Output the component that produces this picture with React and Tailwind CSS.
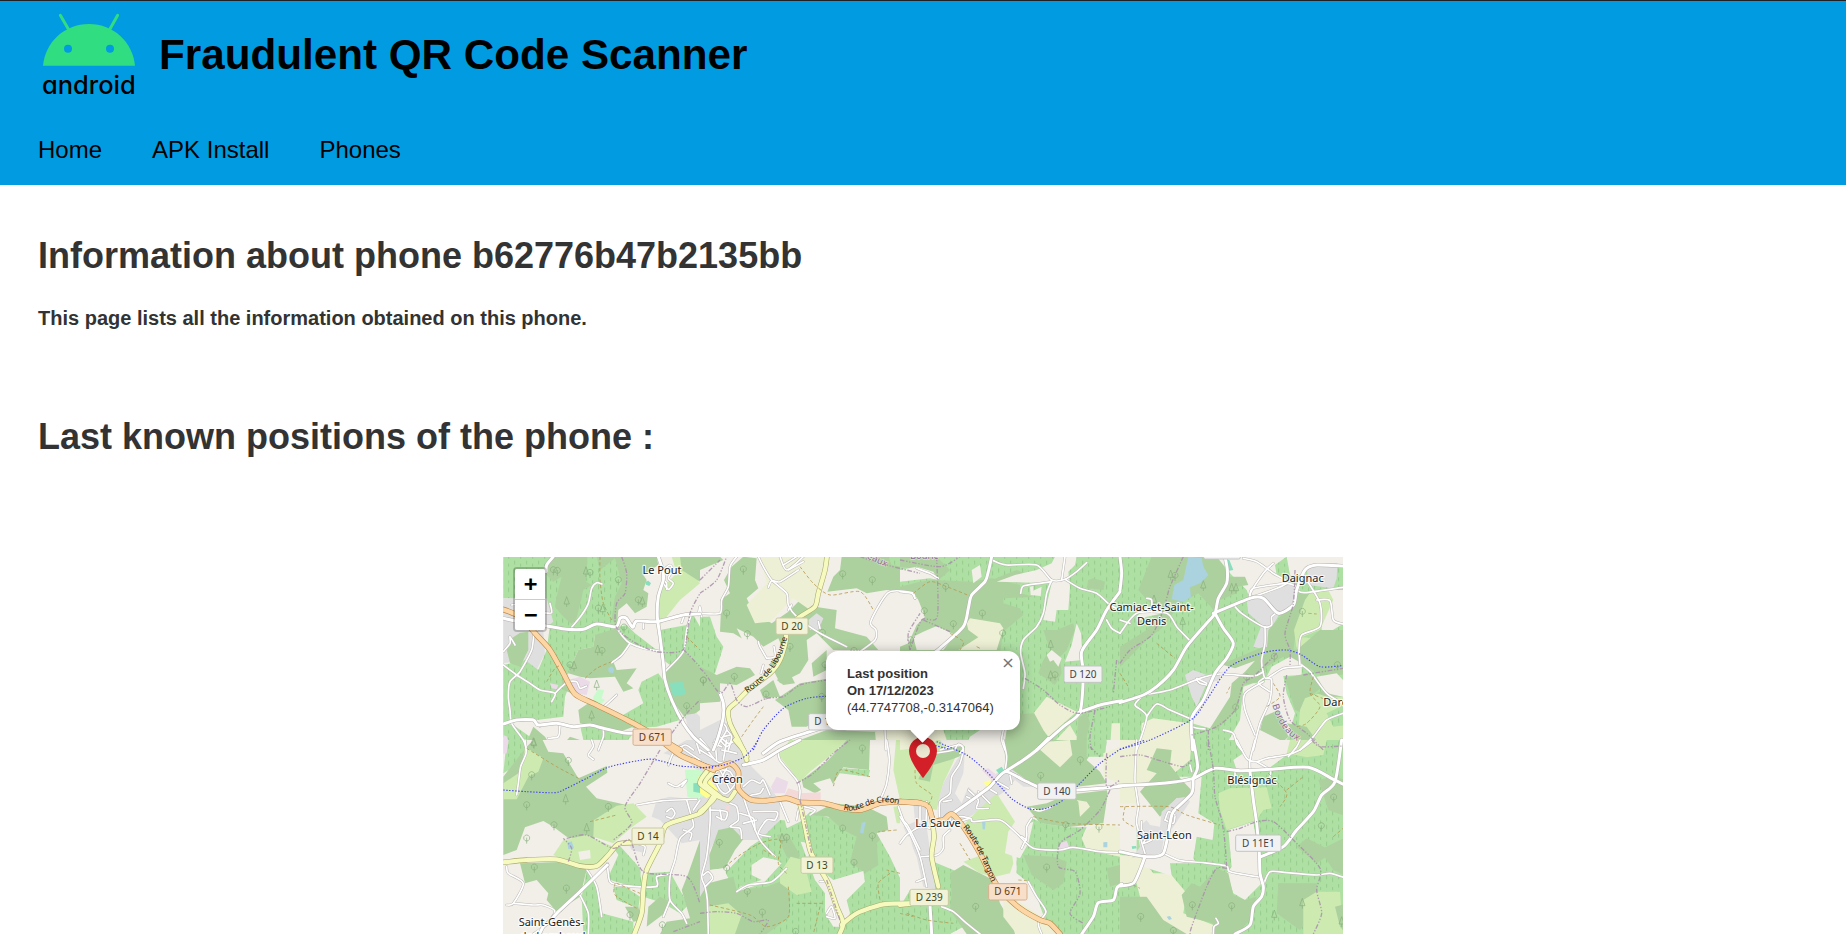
import React from "react";

/* Map drawing: eight tiles, three drawing units per pixel. */
const TILES = {
  A: [0, 0, 600, 570],
  B: [600, 0, 600, 570],
  C: [1200, 0, 660, 570],
  D: [1860, 0, 680, 570],
  E: [0, 570, 600, 582],
  F: [600, 570, 600, 582],
  G: [1200, 570, 660, 582],
  H: [1860, 570, 680, 582],
};

const FILL = {
  f: "#add19e",
  v: "#aedfa3",
  m: "#cdebb0",
  l: "#eef0d5",
  r: "#e0dfdf",
  g: "#f2efe9",
  w: "#aad3df",
  i: "#ebdbe8",
  k: "#f3d9d8",
  p: "#88dfbe",
  c: "#c8facc",
  y: "#ffff90",
};

const AREAS = {
  A: [
    "v 10,20 160,20 140,60 140,150 10,145",
    "f 150,20 470,20 475,45 430,75 440,90 430,120 445,130 440,170 405,190 380,160 355,180 350,235 215,228 140,180 135,60",
    "v 135,70 160,95 185,80 170,140 165,170 190,200 215,222 230,205 250,120 275,105 258,95 262,20 290,20 300,60 345,25 365,100 345,140 335,205 350,232 290,238 140,225",
    "r 10,145 140,145 160,215 130,240 135,310 110,360 70,330 10,340",
    "v 10,345 75,330 115,360 140,300 150,225 350,232 330,260 285,255 280,290 235,300 205,370 190,390 210,400 195,440 190,500 110,510 10,520",
    "f 20,300 35,265 60,248 85,245 85,300 60,350 30,340",
    "f 285,255 350,235 395,280 340,335 350,360 410,355 380,400 400,415 370,425 345,380 270,385 240,380 205,370 235,300 280,290",
    "v 350,232 380,225 405,250 470,300 400,285",
    "v 475,370 510,420 540,510 470,530 400,535 360,500 430,460 415,420 425,395",
    "i 205,390 240,380 270,395 260,435 225,430",
    "i 150,400 175,405 170,418 155,415",
    "f 185,390 205,395 215,430 190,420",
    "c 280,440 295,418 312,420 305,445 315,450 300,465 280,452",
    "f 235,480 265,460 330,480 360,505 400,530 360,545 300,535 240,520",
    "v 240,525 310,535 400,550 360,600 290,600 250,570",
    "v 10,520 40,525 90,560 70,600 10,560",
    "i 10,555 22,560 22,600 10,600",
    "f 70,600 100,530 135,560 160,600",
    "f 175,600 210,560 240,570 245,600",
    "m 515,20 540,20 600,100 540,150 480,225 468,160 490,110 530,70",
    "f 540,20 600,20 600,95 545,60",
    "v 480,240 560,225 575,185 600,230 600,360 555,305 510,345 490,330",
    "f 495,365 555,305 600,355 600,480 560,510 515,450 490,390",
    "p 508,398 548,396 558,432 520,440",
    "p 436,95 445,92 453,100 448,108 438,104",
    "r 555,495 590,490 600,500 600,600 570,560",
    "w 325,355 335,348 343,358 338,370 326,366",
  ],
  B: [
    "f 0,20 60,20 70,30 0,60",
    "f 95,50 130,20 170,25 165,90 175,115 140,145 160,185 215,220 265,185 300,150 345,170 410,180 405,235 500,260 535,300 400,300 350,250 320,270 325,330 300,370 240,400 215,350 200,320 170,310 150,280 100,250 60,245 62,200 60,150 90,130 72,90",
    "l 180,20 390,20 345,170 330,180 280,145 210,215 165,220 140,165 200,100",
    "g 110,235 160,260 190,290 235,265 250,300 200,350 180,330 150,315",
    "v 0,200 30,200 50,260 70,290 45,370 30,380 0,350",
    "f 0,350 50,375 110,350 150,355 165,375 110,405 60,400 60,455 0,460",
    "f 420,60 425,20 660,20 660,130 560,120 500,130 470,115 382,125 400,80",
    "v 565,20 660,20 660,60 575,45",
    "f 640,180 660,180 660,300 622,300 630,240",
    "f 270,420 300,400 390,385 380,490 320,530 275,530 265,480 225,450",
    "f 335,340 380,300 380,360 340,380",
    "f 180,420 220,390 240,440 190,445",
    "f 230,390 270,370 285,400 250,405",
    "r 0,540 60,510 80,520 140,600 0,600",
    "f 270,570 300,570 380,540 530,545 530,600 330,600",
    "r 325,210 350,190 370,205 355,240 330,240",
    "l 525,545 600,540 600,600 530,600",
  ],
  C: [
    "v 0,20 660,20 660,600 0,600",
    "f 0,110 60,95 100,90 215,95 275,85 360,105 360,130 400,140 310,145 310,160 360,175 370,195 310,245 300,310 0,310",
    "f 0,20 110,20 150,60 110,95 70,60 0,50",
    "g 0,60 50,50 100,65 115,90 90,85 0,95",
    "g 0,120 40,128 55,150 75,200 50,225 25,280 0,290",
    "g 215,60 240,45 245,80 220,100",
    "f 275,90 350,60 400,80 360,100",
    "l 200,220 210,205 300,220 310,235 290,300 175,300 235,262 205,240",
    "g 70,245 110,228 165,255 130,300 50,300 40,260",
    "g 455,40 465,20 530,20 525,45 505,65 510,110 505,180 470,180 465,215 430,210 455,100 290,95 345,75 410,60",
    "g 390,110 400,108 400,122 425,110 422,138 392,135",
    "f 430,240 470,240 520,220 525,240 500,300 480,320 485,370 465,405 415,370 430,330 450,300",
    "g 530,220 543,250 548,330 495,335 515,285",
    "g 440,315 455,300 485,325 475,350 460,330 450,335",
    "f 565,90 580,85 615,95 610,120 560,115",
    "f 310,480 370,492 405,490 430,530 440,560 410,600 310,600",
    "l 402,488 440,440 530,485 445,560 430,540",
    "l 440,600 510,525 530,560 530,600",
    "f 535,505 560,485 570,520 560,560 565,600 530,580",
    "l 635,520 660,520 660,600 630,600",
    "g 210,560 240,540 320,540 310,600 190,600",
    "l 0,540 130,540 150,600 0,600",
  ],
  D: [
    "v 0,20 680,20 680,600 0,600",
    "f 95,20 300,20 325,80 350,90 350,130 300,150 290,190 235,130 180,160 130,230 80,270 0,350 0,290 80,240 100,200 95,165 55,120",
    "w 205,20 245,24 250,50 265,75 240,100 210,112 213,140 190,155 155,148 163,105 190,90",
    "g 50,200 80,170 115,165 130,190 80,200 50,215",
    "g 290,20 500,20 465,45 470,75 510,95 480,120 390,148 380,120 330,70",
    "f 330,80 375,80 385,105 350,110",
    "p 312,28 328,30 340,60 328,62",
    "r 380,150 420,140 520,98 540,115 525,155 480,190 450,240 440,300 400,290 425,225 385,190",
    "g 500,20 669,20 669,45 560,50 555,75 510,75",
    "r 560,45 652,38 650,85 640,115 565,105",
    "g 600,120 680,120 680,215 630,245 605,240",
    "f 535,125 570,130 560,200 530,230 520,300 440,310 445,240 485,195 525,160",
    "m 555,150 570,128 625,120 640,150 600,240 545,262 587,265 582,300 530,300 522,240",
    "f 300,345 430,290 530,300 600,240 680,240 680,370 620,385 560,350 490,320 440,350 420,395 370,405 350,480 290,540 240,520 270,530 330,440",
    "g 280,370 310,345 345,355 405,332 375,365 335,400 330,440 270,535 215,520 250,450",
    "r 195,375 220,360 260,375 300,365 300,390 260,400 230,470 215,440",
    "g 370,410 400,400 430,400 455,350 510,320 545,340 545,375 490,378 500,430 525,490 505,560 480,600 310,600 360,510",
    "f 430,500 475,480 505,560 490,575 420,540",
    "f 495,385 560,370 620,400 570,440 550,490 525,480",
    "m 505,600 535,550 540,480 555,445 640,415 680,440 680,600",
    "f 590,430 640,410 680,420 680,440 620,440",
    "v 620,490 680,460 680,525 640,530",
    "g 590,380 650,370 669,390 669,440 620,430",
    "f 500,520 560,530 610,600 560,600",
    "l 65,520 100,505 210,520 215,600 60,600",
    "v 0,540 30,520 60,540 40,600 0,600",
  ],
  E: [
    "v 20,0 80,0 75,60 10,100",
    "i 10,0 26,0 20,40 10,42",
    "f 80,20 100,0 128,0 145,35 190,40 235,115 320,78 322,98 258,140 290,175 380,195 300,240 282,262 285,310 200,290 160,260 130,243 75,262 50,330 10,345 10,110",
    "m 75,20 130,55 115,95 85,110 50,178 10,178 10,130 62,95",
    "m 282,240 350,197 400,190 440,230 395,262 340,310 280,290",
    "m 190,300 260,285 340,320 320,360 280,385 230,380 160,345",
    "g 235,335 270,330 272,355 240,360",
    "f 60,370 200,365 260,390 240,470 170,515 140,480 145,460 110,420 75,430",
    "f 145,478 200,485 185,515",
    "v 325,330 360,318 420,385 425,440 400,440 330,420 325,365",
    "v 245,470 260,390 290,430 305,520 345,530 400,545 400,582 250,582",
    "v 340,440 375,440 420,470 415,505 350,480",
    "v 440,400 510,395 545,460 565,495 540,520 490,490 430,470",
    "f 375,500 415,500 425,540 400,545",
    "f 445,500 480,470 510,485 500,515 440,560",
    "f 480,582 500,545 570,535 545,450 565,400 600,300 600,582",
    "r 470,180 510,170 600,180 600,300 545,310 480,240 455,230",
    "r 490,40 560,0 600,0 600,100 560,60",
    "c 555,90 612,88 615,130 595,180 562,170",
    "y 595,110 612,100 612,125 595,122",
    "p 580,130 600,128 605,160 580,155",
    "r 385,310 430,310 438,340 395,330",
    "g 320,360 345,330 355,345 330,400",
    "w 202,308 215,304 222,325 205,328",
  ],
  F: [
    "r 0,0 115,0 135,60 195,120 240,185 240,235 200,300 130,300 95,265 60,270 30,330 30,420 45,445 0,470",
    "v 180,300 240,240 300,245 330,215 535,280 570,340 640,425 630,450 660,460 660,582 180,582 75,400 150,320",
    "f 335,225 400,190 500,200 560,230 565,270 530,310 535,375 495,400 450,365 470,290 430,270 385,230",
    "f 28,345 55,270 95,262 130,298 105,330 75,385 30,390",
    "g 30,390 70,385 85,415 40,430",
    "f 25,430 100,410 110,450 200,440 240,425 270,430 270,530 200,582 0,582 0,470",
    "g 155,375 190,352 230,360 245,370 190,430 110,455 120,440 185,420 155,405",
    "f 230,285 262,280 300,345 290,370 260,350",
    "m 240,400 272,350 310,360 335,455 290,465 240,430",
    "m 20,500 85,490 125,525 105,582 30,582",
    "g 302,305 330,310 325,360 400,420 490,393 495,425 440,480 450,520 430,560 400,560 375,520 375,460 345,420",
    "g 240,180 300,180 300,245 260,265",
    "m 235,45 270,0 440,0 400,40 330,95 300,125",
    "f 385,60 440,0 510,0 507,90 430,82 400,130 345,160 310,142 305,120",
    "g 340,130 390,115 400,135 370,155",
    "v 430,85 510,90 505,110 420,100",
    "m 588,0 660,0 660,180 600,180 580,90",
    "i 213,140 230,110 265,125 255,160 220,160",
    "k 265,145 300,155 300,190 250,172",
    "k 300,160 362,157 362,182 300,186",
    "m 580,200 640,195 640,250 590,250",
    "w 485,248 497,246 490,280 480,278",
    "k 75,200 90,195 86,214 76,212",
    "g 530,280 600,260 650,405 605,425 570,350",
    "c 0,90 25,110 10,170 0,170",
    "y 0,110 30,120 55,150 20,175 0,160",
    "r 600,250 660,250 660,320",
  ],
  G: [
    "m 0,0 120,0 165,55 130,130 110,210 0,185",
    "l 0,0 110,0 90,20 0,30",
    "f 80,60 140,25 195,18 190,45 150,60 100,75 90,125 55,118",
    "r 115,180 130,130 170,60 195,30 190,100 165,160 185,190 205,140 225,160 250,150 290,100 330,85 400,120 410,140 370,140 345,120 320,150 270,185 240,210 180,250 120,240",
    "i 245,90 265,85 290,105 280,125",
    "p 288,90 305,80 313,92 300,106",
    "r 40,190 75,190 80,260 100,400 105,450 70,440 50,350 10,260 45,245",
    "f 310,0 440,0 400,50 320,95",
    "f 330,85 450,0 600,0 560,60 600,95 620,130 530,140 410,140",
    "l 410,20 440,5 510,0 517,45 480,82",
    "v 560,0 620,0 615,50 560,50",
    "l 610,40 660,20 660,130 610,110",
    "f 380,200 440,190 500,165 625,150 610,250 500,262 420,250",
    "l 530,180 560,185 570,200 540,230 535,185",
    "g 620,150 660,145 660,220 640,220",
    "l 560,270 600,250 660,262 660,360 560,330 545,295",
    "m 235,210 290,160 345,245 325,275 340,370 330,400 285,410 240,330 195,250",
    "v 395,235 430,250 500,262 560,262 545,295 560,330 660,350 660,582 450,582 400,440 350,400 350,320",
    "g 325,275 400,245 385,310 360,355 315,340",
    "g 110,290 190,250 245,350 190,365 160,390 110,360",
    "m 190,365 245,345 280,410 240,400",
    "f 370,345 460,350 500,365 490,430 460,450 395,405",
    "v 100,365 160,390 260,440 300,500 150,582 0,582 0,500 30,450 105,450",
    "f 150,400 190,375 240,400 280,420 300,490 340,560 345,582 200,582 150,510 155,460",
    "l 310,480 350,480 440,540 475,582 350,582 310,530",
    "i 473,335 480,310 500,302 508,322",
    "f 620,385 660,375 660,430 630,440",
    "g 0,285 30,290 45,350 40,420 20,420 0,380",
    "w 246,245 257,242 255,268 248,268",
    "w 610,307 622,306 622,322 610,322",
    "y 250,128 270,120 278,135 262,142",
  ],
  H: [
    "v 0,0 680,0 680,582 0,582",
    "l 0,0 215,0 210,60 150,110 60,130 55,260 0,260",
    "l 0,345 60,350 100,400 150,400 200,460 190,520 280,555 280,582 130,582 80,500 0,465",
    "v 0,440 50,430 60,470 0,510",
    "g 0,190 50,190 50,340 0,340",
    "g 50,130 180,110 245,110 235,220 283,250 278,300 230,290 220,355 230,370 150,370 155,408 70,380 50,260",
    "f 110,25 155,30 150,75 185,120 212,148 208,175 170,175 120,230 60,155 110,100 80,90",
    "r 120,260 125,215 170,175 200,170 210,185 160,260 130,300 125,340 35,355 60,320 58,260 80,240 90,255",
    "g 350,0 520,0 500,45 440,90 350,90 340,60 370,40",
    "m 510,0 620,0 610,45 560,52 500,40",
    "m 295,160 330,145 440,142 455,205 430,210 410,240 320,270 300,210",
    "g 325,270 400,245 410,310 425,430 375,480 340,460 320,400 335,380",
    "f 0,470 80,470 130,540 200,582 0,582",
    "f 185,465 215,430 240,440 290,385 325,400 340,465 375,480 410,470 390,540 350,582 275,582 280,550 200,530",
    "f 475,430 590,430 600,500 540,570 470,520",
    "f 595,120 640,110 680,120 680,230 625,210",
    "f 530,320 560,295 640,335 590,370",
    "f 600,330 680,290 680,410 640,390",
    "m 550,480 590,455 660,455 669,582 550,582",
    "f 645,500 680,490 680,582 660,560",
    "p 35,319 48,318 50,325 37,327",
    "w 140,530 150,528 156,537 147,540",
  ],
};

const ROADS = {
  A: [
    "w 160,20 140,45 138,65", "w 10,205 80,220 140,228 200,238 250,238 290,222 348,230 360,205 378,204 398,232 410,213 470,215 550,195 600,192",
    "s 215,232 245,195 265,160 275,115 290,98 306,102", "s 348,230 370,262 390,280 430,295 485,305",
    "s 390,280 365,315 335,338", "w 475,20 488,60 490,90 475,140 472,200 480,260 490,340 495,390 515,450 550,520 580,560 625,600",
    "s 490,60 510,45 518,60 505,85 520,100 505,118 490,100", "s 490,90 500,100 500,118", "s 490,370 530,330 552,300 560,240 575,190",
    "s 595,195 600,170 605,200", "s 545,218 552,198", "s 430,235 430,215",
    "s 145,228 105,245 95,300 60,365 30,395 25,440 30,480 35,520 70,570 80,600", "s 10,345 50,375 90,400 120,420 165,430 155,455",
    "s 165,430 185,410 205,395 230,395 240,415 260,408", "s 10,305 30,280 30,260 45,285", "w 10,522 50,510 100,510 115,525 170,520 220,530 270,525 310,535 370,548 410,550",
    "s 115,520 120,530", "s 180,525 175,560 145,565", "s 310,540 310,560 295,600", "s 350,435 310,472", "s 35,165 70,160", "s 150,160 155,188 130,188",
    "o 0,175 60,200 110,255 150,300 190,370 225,432 290,465 400,520 540,600",
  ],
  B: [
    "s 110,20 90,50 85,110 65,150 60,190 0,190", "s 175,20 190,50 215,90 260,130 265,165 290,200 360,250 440,290",
    "s 295,60 240,95 215,92 205,112", "s 240,20 260,60 310,20", "s 250,45 290,20", "s 265,60 310,35", "s 265,180 275,165",
    "s 200,325 180,290 175,275", "s 200,325 225,320 222,290", "s 360,235 355,215", "s 480,305 525,270 528,240 512,215 565,128 635,128 645,145",
    "w 190,610 240,575 330,545 380,530", "s 183,370 190,345", "w 60,430 70,460 70,500 55,560 40,600", "s 50,590 80,540 70,520", "s 0,565 30,600", "s 60,560 85,580 110,570", "s 80,540 95,560 85,600",
    "s 70,560 90,555", "s 40,580 65,590",
    "s 555,540 558,600",
    "y 382,10 375,60 355,130 345,170 300,200 260,235 258,270 240,330 210,370 150,415 110,455 85,480 90,520 115,570 140,620",
  ],
  C: [
    "w 275,20 265,65 255,95 215,135 205,175 190,230 120,295 100,310", "s 280,32 320,45 410,45 455,90 495,88 530,65 560,38", "s 485,90 495,20",
    "s 455,90 440,130 430,190 410,230 370,270 362,310 375,370 370,415", "s 455,95 420,100 370,108 362,130", "s 495,88 540,115 590,130 630,165 660,180",
    "s 0,125 35,130 45,145", "s 50,55 90,70 115,85", "w 660,125 620,180 590,240 545,305 550,370 540,485 490,530 410,600", "s 620,210 635,235 660,250",
    "w 535,488 600,465 665,452", "s 310,540 305,570 315,600", "s 120,600 175,585 190,595 180,610",
  ],
  D: [
    "w 315,20 322,60 320,100 295,145 285,190 260,220 200,290 160,360 110,410 70,435 0,458", "w 280,190 390,145 430,145 475,190 520,165 530,120 555,60 590,45 669,48",
    "w 285,190 310,235 340,280 320,325 285,370 250,450 215,505 218,600", "s 370,25 410,35 460,70 500,100 390,140 430,70 460,40", "s 390,140 400,115 500,100 530,110",
    "s 345,170 365,190 430,230 455,225 455,200 475,185", "s 435,230 435,280 425,330 430,370 440,385 490,355 545,350", "s 530,120 555,128 669,112", "s 560,90 600,160 600,230 545,255 537,300 540,345",
    "s 590,150 630,152 640,210 669,222", "s 545,345 570,365 620,430 669,460", "s 70,435 150,420 240,385 300,372 400,378 430,365", "s 230,385 260,400", "s 230,390 240,400 260,405",
    "s 440,385 455,390 450,450 420,520 400,600", "s 430,395 375,430 375,480 405,555", "s 430,385 415,400 450,425", "s 310,540 340,550 350,580 365,600", "s 0,250 50,190 140,190 170,230 208,270", "s 95,185 95,150 80,145", "s 0,210 30,220",
    "s 70,435 45,465 80,500 50,600", "s 80,500 110,462 150,480 215,508", "s 215,530 235,535 255,537", "s 669,490 620,510 580,560 540,600", "w 0,20 5,70 0,120",
  ],
  E: [
    "s 75,0 78,40 62,80 55,130 50,165", "s 275,0 280,20 265,45 280,58", "s 20,380 25,400 70,430 40,490 20,495", "s 40,490 100,495 130,495 165,515 130,560 100,582",
    "w 322,375 240,455 170,520 150,545 130,560 110,600", "s 240,465 265,520 265,582", "s 258,385 290,440 305,530", "s 322,370 330,425 370,437 468,440 470,410 510,402",
    "s 410,195 490,182 590,178", "s 560,180 570,215 580,260 540,295 525,360 510,410 510,480 545,520 560,550", "s 510,480 490,530", "s 500,215 515,205 525,220 515,235 500,230", "s 410,310 435,320 430,345",
    "s 505,130 530,140 560,120 545,140", "s 505,75 520,40 555,15 580,30", "s 540,20 600,60", "s 590,10 600,40", "s 580,210 600,180", "s 550,270 575,280 570,300",
    "o 480,0 540,45 600,72 640,90", "y 10,367 80,360 170,358 240,378 290,378 325,345 355,312 400,308", "y 640,170 600,220 500,255 480,310 440,390 430,450 425,520 400,590",
    "y 640,95 615,130 660,170",
  ],
  F: [
    "s 0,0 45,60 70,70", "s 45,0 50,60", "s 0,30 40,55", "s 60,0 80,20 100,0", "s 65,30 110,40", "s 80,0 70,60", "w 130,75 190,60 240,30 300,0",
    "s 235,30 240,60 290,120 300,150 298,180", "s 130,170 150,230 180,300 225,350", "s 130,140 155,120 180,130 190,120 210,165", "s 140,175 155,165 180,160 190,145",
    "s 240,185 265,245", "s 160,215 230,215 225,240 200,240 175,280 210,290", "s 30,200 30,250 20,350 5,410 15,440 22,480 25,582", "s 10,405 25,395 38,415 15,440",
    "s 30,210 80,215 75,240 50,230", "s 90,190 110,200 115,240 90,260 120,265 125,295", "s 120,220 160,235 165,270", "s 60,210 65,240", "s 130,250 170,240",
    "s 560,0 568,60 560,130 545,170", "s 110,455 145,435 215,425 260,385", "s 595,200 610,240 625,260 660,330", "s 290,240 300,200 345,210 330,225",
    "s 45,100 60,90 90,95 105,130 80,160 60,150 45,120", "s 60,90 90,150", "s 80,85 55,130", "s 50,110 95,130",
    "s 360,425 385,425", "s 380,520 395,500 405,535 380,530",
    "y 0,215 45,170 0,130 20,95", "y 140,60 130,30 105,0", "y 45,165 85,180 105,155",
    "y 300,190 315,260 330,330 350,370 385,430 410,500 430,550 415,590", "y 425,555 470,520 550,493 640,490",
    "o -20,62 20,80 50,85 90,70 115,95 115,145 150,178 200,182 260,175 300,187 370,190 430,205 480,210 540,190 600,185 660,190",
  ],
  G: [
    "w 315,95 370,60 410,30 445,-5", "w 160,220 230,170 270,140 315,95 370,120 412,140", "w 529,150 600,145 665,138", "s 310,0 320,50 315,95",
    "s 100,40 160,30 175,12 190,25 180,70 155,110 150,160 120,185 118,230", "s 155,180 130,185", "s 205,150 235,180 230,205 265,205", "s 235,155 270,190", "s 265,145 290,160", "s 290,125 325,145", "s 330,105 335,130", "s 200,170 220,180",
    "s 150,225 155,250 210,235 220,245 300,240 350,280 400,325 480,330 520,322 600,335 665,337", "s 395,235 380,260 380,290 365,325", "s 365,290 380,300", "s 395,205 420,213 455,200",
    "s 0,230 30,280 60,350 80,440", "s 0,310 20,285 60,260 90,265", "s 65,350 110,345 130,325 130,290 150,270", "s 50,425 75,415", "w 90,495 95,582", "s 125,500 160,515 200,550 240,582",
    "s 385,425 410,470 438,515 415,550 425,582", "w 665,432 650,445 640,480 595,488 580,530 545,582", "s 210,235 180,230 150,250", "s 60,250 60,180", "s 78,250 80,185",
    "y 95,230 102,290 95,350 115,440", "y 0,495 40,490",
    "o 0,185 50,187 85,200 100,240 130,240 155,222 190,260 240,340 270,400 300,450 360,505 420,540 450,550 480,582",
  ],
  H: [
    "w -5,137 100,132 170,125 220,115 285,85 360,92 450,88 565,82 640,118 680,138", "w 220,0 233,80 220,115 215,160 160,215 150,250 130,340 80,350 0,335", "w 75,350 60,390 40,430 0,438",
    "s 50,0 45,120 55,200 50,250 75,340", "s 65,245 65,270 80,290 70,310 95,300", "s 135,240 145,215 165,225", "s 135,240 160,250 165,230", "s 130,340 180,362 250,368 320,378 330,395 420,412",
    "w 390,95 400,180 410,250 418,340 420,400 430,440 425,470 400,500 390,555 345,582", "s 405,0 390,60 390,90", "s 350,0 380,55 410,65 440,55 500,45 540,30 580,0", "s 410,65 450,90 450,110", "s 505,50 530,20 540,0", "s 345,95 345,120",
    "w 423,350 490,320 530,270 580,215 605,165 645,125 665,0", "s 430,435 450,395 500,398 590,405 630,400 680,415", "s 280,582 282,560 295,550 288,535", "s 210,75 215,95",
  ],
};

const LINES = {
  A: [
    "d 365,20 380,70 375,130 350,160 348,230 400,275 470,305 550,298 570,190 600,130", "d 550,298 600,350", "d 515,550 560,490 600,450",
    "p 300,20 300,90 310,160 335,210", "p 140,395 165,355 185,345", "p 335,335 290,355 255,385", "p 560,260 600,300",
  ],
  B: [
    "d 0,130 50,90 80,20", "d 0,90 60,30", "d 0,355 15,370 60,430 90,400 110,450 140,470 200,445 250,440 300,405 380,390", "d 480,20 540,40 660,70", "d 630,300 625,250 660,190",
    "p 300,50 340,100 390,135 480,125 520,180", "p 125,560 160,510 190,470",
    "b 160,600 190,540 250,475 320,445 390,438",
  ],
  C: [
    "d 0,30 120,50 180,20", "d 110,20 112,200 65,210 30,300", "d 70,210 150,245", "d 375,385 430,420 480,465 535,490 630,470", "d 585,480 570,560 575,600", "d 650,330 640,430",
    "p 40,130 90,95 140,110 210,138", "p 150,250 190,275 180,300", "p 230,290 240,295", "b 80,580 150,598",
  ],
  D: [
    "d 190,20 150,110 130,180 95,255 30,300 0,340", "d 525,60 520,160 495,250 510,300 510,345", "d 470,310 400,380 370,400 345,480 290,530 215,555", "d 265,540 265,600", "d 500,375 490,440 510,510 560,550 610,600", "d 550,375 669,355",
    "p 110,280 165,325", "p 580,380 570,430 600,470 560,520 530,530", "p 570,430 620,450", "p 330,410 320,430", "p 565,190 590,192", "p 460,400 480,440 440,470", "p 0,370 25,410",
    "b 0,598 90,570 215,508 260,450 330,350 430,308 500,300 545,315 600,350 669,347",
  ],
  E: [
    "d 480,30 450,80 420,130 375,200 395,250 340,300", "d 200,295 260,285 340,325 390,300 430,395 560,410 600,490", "d 205,365 215,325 190,295", "d 520,575 600,545",
    "p 80,25 170,80 255,125", "p 270,245 350,225", "p 345,430 345,465 410,505", "p 350,430 420,460",
    "b 10,150 80,155 165,158 200,145 260,115 330,80 440,58 480,62 540,78 640,84",
  ],
  F: [
    "d 290,130 340,100 400,40 450,0", "d 0,520 50,515 110,520 160,545 205,540 180,582", "d 300,180 320,270 335,340", "d 380,420 420,540", "b 0,84 70,75 125,55 150,35 175,0",
    "p 75,380 120,345 180,310 240,300 235,370 260,400", "p 190,330 225,350", "p 510,110 420,90 400,140", "p 265,440 265,530 200,560 150,525 30,495", "p 290,490 370,490", "p 360,500 340,582", "p 590,270 535,275", "p 570,400 535,430 540,480", "p 600,400 560,390",
  ],
  G: [
    "d 630,150 600,210 540,270 480,310 475,380 525,395 540,460 510,520 550,550", "d 620,40 620,140 660,120", "d 570,20 600,50",
    "p 45,90 50,130 95,165 85,195", "p 400,230 500,250 660,255", "p 180,310 210,360", "p 20,520 80,540 160,550", "p 0,520 40,530", "p 355,420 380,422",
    "b 110,5 200,45 260,95 310,150 340,180 390,207 440,205 490,180 540,130 600,70 660,28",
  ],
  H: [
    "d 0,50 60,45 130,65 190,80 215,60", "d 265,0 280,90 285,170 305,240 315,310 320,385", "d 320,275 360,265 410,245 460,245 520,300 600,385 590,450 605,520 580,582", "d 320,385 290,385 260,440 215,560 210,582", "d 575,0 600,20 669,18",
    "p 0,200 145,200 200,225 300,255", "p 15,200 10,240 40,260", "p 445,100 500,160 480,200", "p 500,150 550,110", "p 640,290 669,265", "p 40,435 60,445",
    "b 0,28 75,0",
  ],
};

/* The first letter tells a conifer (c) from a broadleaf tree (t). */
const TREES = {
  A: ["t160,60", "t172,62", "c258,65", "t270,68", "t355,90", "t415,150", "c427,155", "c200,155", "t295,175", "c308,178", "c293,300", "t306,302", "t210,345", "c222,348", "c290,405", "c275,497", "c100,578", "t610,390", "t560,468", "t372,232"],
  B: ["t130,58", "t80,190", "t142,252", "t270,290", "t103,380", "t198,433", "t367,248", "t462,302", "t428,72", "t517,90", "t365,440", "t10,392", "t375,345"],
  C: ["t73,183", "t160,222", "t247,190", "t32,270", "t308,250", "c452,285", "t465,375", "c452,377", "t137,110"],
  D: ["c152,75", "t165,77", "c250,107", "c188,216", "c102,150", "c335,115", "c348,115", "t547,185", "t463,320", "t380,382", "t347,472", "t652,345"],
  E: ["t205,62", "t80,195", "t162,255", "c197,178", "c260,265", "t80,295", "t103,382", "t199,445", "t325,200", "t95,105", "t390,525", "t487,555", "c102,10"],
  F: ["t487,25", "t58,308", "t428,265", "t517,288", "t462,368", "t142,455", "t187,517", "c246,295", "t260,293", "t80,385", "t287,575"],
  G: ["t541,60", "t422,107", "t440,382", "t227,500", "t497,255", "t597,262"],
  H: ["t641,172", "t604,258", "t217,495", "t335,498", "t62,530", "t160,572", "c547,490", "c463,525", "c665,545"],
};

const SHIELDS = [
  [398, 536, 117, "D 671", "o"],
  [827, 203, 98, "D 20", "y"],
  [925, 490, 117, "D 121", "w"],
  [1691, 347, 116, "D 120", "w"],
  [395, 833, 98, "D 14", "y"],
  [902, 920, 98, "D 13", "y"],
  [1612, 698, 117, "D 140", "w"],
  [1229, 1017, 117, "D 239", "y"],
  [1465, 1000, 117, "D 671", "o"],
  [2206, 854, 138, "D 11E1", "w"],
  [2110, -23, 112, "", "w"],
];

const SHIELD_STYLE = {
  o: ["#f7dfca", "#d7b08c", "#5f3810"],
  y: ["#f2f2d6", "#c9c9a2", "#46461a"],
  w: ["#f2f2f2", "#c4c4c4", "#444444"],
};

const PLACES = [
  [486, 72, "Le Pout"],
  [1955, 183, "Camiac-et-Saint-"],
  [1955, 224, "Denis"],
  [2408, 96, "Daignac"],
  [2470, 467, "Dare", "start"],
  [682, 699, "Créon"],
  [1314, 830, "La Sauve"],
  [2256, 701, "Blésignac"],
  [1993, 867, "Saint-Léon"],
  [154, 1128, "Saint-Genès-"],
  [158, 1169, "de-Lombaud"],
];

const ROAD_STYLE = {
  s: ["#bcb9b5", 8, "#ffffff", 5],
  w: ["#b3b0ad", 12, "#ffffff", 9],
  y: ["#a9ab6e", 16, "#f7fabf", 12.5],
  o: ["#bb8748", 17, "#fcd6a4", 13.5],
};

function parse(entry) {
  const [kind, ...rest] = entry.split(" ");
  return { kind, pts: rest.map((p) => p.split(",").map(Number)) };
}

function curve(pts) {
  let d = `M${pts[0][0]},${pts[0][1]}`;
  for (let i = 0; i < pts.length - 1; i++) {
    const a = pts[i - 1] || pts[i];
    const b = pts[i];
    const c = pts[i + 1];
    const e = pts[i + 2] || c;
    d += `C${b[0] + (c[0] - a[0]) / 8},${b[1] + (c[1] - a[1]) / 8} ${c[0] - (e[0] - b[0]) / 8},${c[1] - (e[1] - b[1]) / 8} ${c[0]},${c[1]}`;
  }
  return d;
}

const tileIds = Object.keys(TILES);
const roads = tileIds.flatMap((id) =>
  ROADS[id].map((r) => ({ ...parse(r), shift: `translate(${TILES[id][0]} ${TILES[id][1]})` }))
);

function MapCanvas() {
  return (
    <svg className="block h-full w-full" viewBox="9 21 2520 1131" preserveAspectRatio="none" aria-label="Map">
      <defs>
        <pattern id="vine" width="36" height="50" patternUnits="userSpaceOnUse">
          <path d="M8 5v13M26 13v13M8 32v11M26 41v9" stroke="#8cc283" strokeWidth="2.2" />
        </pattern>
        {tileIds.map((id) => (
          <clipPath id={`tile${id}`} key={id}>
            <rect x="0" y="0" width={TILES[id][2]} height={TILES[id][3]} />
          </clipPath>
        ))}
        <path id="libourne" d="M742,430 C795,392 842,350 864,255" />
        <path id="creon" d="M1030,779 C1070,792 1095,762 1140,758 S1180,762 1205,763" />
        <path id="targon" d="M1388,832 C1425,875 1445,925 1478,1005" />
        <path id="bordeaux" d="M2317,465 C2330,510 2350,550 2400,578" />
        <path id="limit" d="M1065,16 C1100,20 1130,40 1170,55" />
      </defs>
      <rect x="0" y="0" width="2540" height="1160" fill="#f2efe9" />
      {tileIds.map((id) => (
        <g key={id} transform={`translate(${TILES[id][0]} ${TILES[id][1]})`}>
          <g clipPath={`url(#tile${id})`}>
            {AREAS[id].map((a, i) => {
              const { kind, pts } = parse(a);
              return (
                <g key={i}>
                  <polygon points={pts.join(" ")} fill={FILL[kind]} />
                  {kind === "v" && <polygon points={pts.join(" ")} fill="url(#vine)" />}
                </g>
              );
            })}
          </g>
        </g>
      ))}
      {tileIds.map((id) => (
        <g key={id} transform={`translate(${TILES[id][0]} ${TILES[id][1]})`} fill="none" stroke="#86ad7b" strokeWidth="2">
          {TREES[id].map((t) => (
            <path
              key={t}
              transform={`translate(${t.slice(1)})`}
              d={t[0] === "c" ? "M0-15L-8 7H8ZM0 7v9" : "M0 8a9 9 0 1 1 .1 0M0-2v18"}
            />
          ))}
        </g>
      ))}
      <g fill="none" strokeLinejoin="round">
        {["s", "w", "y", "o"].map((kind) => {
          const [edge, outer, fill, inner] = ROAD_STYLE[kind];
          const list = roads.filter((r) => r.kind === kind);
          return (
            <g key={kind}>
              {list.map((r, i) => (
                <path key={i} transform={r.shift} d={curve(r.pts)} stroke={edge} strokeWidth={outer} strokeLinecap="round" />
              ))}
              {list.map((r, i) => (
                <path key={i} transform={r.shift} d={curve(r.pts)} stroke={fill} strokeWidth={inner} strokeLinecap="round" />
              ))}
            </g>
          );
        })}
        {tileIds.map((id) => (
          <g key={id} transform={`translate(${TILES[id][0]} ${TILES[id][1]})`}>
            {LINES[id].map((l, i) => {
              const { kind, pts } = parse(l);
              if (kind === "b") return <path key={i} d={curve(pts)} stroke="#3d3df2" strokeWidth="3.4" strokeDasharray="4 5" />;
              if (kind === "p") return <path key={i} d={curve(pts)} stroke="#b59a50" strokeWidth="2.5" strokeDasharray="10 7" />;
              return <path key={i} d={curve(pts)} stroke="#a88fab" strokeOpacity="0.85" strokeWidth="4" strokeDasharray="14 5 4 5 4 5" />;
            })}
          </g>
        ))}
      </g>
      <g className="font-['Noto_Sans',sans-serif]" strokeLinejoin="round">
        {SHIELDS.map(([x, y, w, label, kind], i) => {
          const [bg, edge, ink] = SHIELD_STYLE[kind];
          return (
            <g key={i}>
              <rect x={x + 1} y={y + 1} width={w - 2} height="49" rx="5" fill={bg} stroke={edge} strokeWidth="3" />
              {label && <text x={x + w / 2} y={y + 36} textAnchor="middle" fontSize="30" fill={ink}>{label}</text>}
            </g>
          );
        })}
        <g fontSize="25" fill="#2b2414">
          <text><textPath href="#libourne" textLength="211">Route de Libourne</textPath></text>
          <text><textPath href="#creon" textLength="171">Route de Créon</textPath></text>
          <text><textPath href="#targon" textLength="187">Route de Targon</textPath></text>
        </g>
        <g className="[paint-order:stroke]" fontSize="28" fill="#8d6b92" stroke="#f2efe9" strokeOpacity="0.6" strokeWidth="4">
          <text><textPath href="#bordeaux" textLength="135">Bordeaux</textPath></text>
          <text><textPath href="#limit" startOffset="36">eaux</textPath></text>
          <text x="1230" y="28">Bouric</text>
        </g>
        <g className="[paint-order:stroke]" fontSize="33" fill="#222222" stroke="#ffffff" strokeOpacity="0.75" strokeWidth="7">
          {PLACES.map(([x, y, label, anchor]) => (
            <text key={label} x={x} y={y} textAnchor={anchor || "middle"}>{label}</text>
          ))}
        </g>
      </g>
    </svg>
  );
}

function AndroidLogo() {
  return (
    <svg className="h-[94px] w-[98px] shrink-0 overflow-visible" viewBox="120 36 294 282" aria-label="android">
      <path d="M129 197C136 126 193 72 267 72S398 126 405 197Z" fill="#30dd81" />
      <path d="M181 46L208 92M353 46L327 92" stroke="#30dd81" strokeWidth="9" strokeLinecap="round" />
      <circle cx="204" cy="146" r="12" fill="#009be0" />
      <circle cx="330" cy="146" r="12" fill="#009be0" />
      <text
        x="126"
        y="281"
        textLength="281"
        lengthAdjust="spacingAndGlyphs"
        fontSize="76"
        className="font-['Inter',sans-serif] font-medium [font-feature-settings:'cv11']"
      >
        android
      </text>
    </svg>
  );
}

function ZoomControl() {
  return (
    <div className="absolute left-[10px] top-[10px] flex flex-col rounded-[4px] border-2 border-black/20 bg-clip-padding text-center font-['DejaVu_Sans_Mono',monospace] text-[22px] font-bold leading-[30px] text-black">
      <button className="h-[31px] w-[30px] rounded-t-[2px] border-b border-[#ccc] bg-white indent-px">+</button>
      <button className="h-[30px] w-[30px] rounded-b-[2px] bg-white indent-px">−</button>
    </div>
  );
}

function Popup() {
  return (
    <div className="absolute left-[323px] top-[94px] h-[79px] w-[194px]">
      <div className="absolute bottom-[-9px] left-[88px] h-[17px] w-[17px] rotate-45 bg-white shadow-[0_3px_14px_rgba(0,0,0,0.4)]" />
      <div className="relative h-full w-full rounded-[12px] bg-white pl-[21px] pt-[14px] text-[13px] leading-[17px] text-[#333] shadow-[0_3px_14px_rgba(0,0,0,0.4)]">
        <p className="font-bold">Last position</p>
        <p className="font-bold">On 17/12/2023</p>
        <p>(44.7747708,-0.3147064)</p>
      </div>
      <div className="absolute bottom-[-9px] left-[88px] h-[17px] w-[17px] rotate-45 bg-white" />
      <button className="absolute right-0 top-0 h-6 w-6 text-center font-['DejaVu_Sans',sans-serif] text-[16px] leading-6 text-[#757575]">×</button>
    </div>
  );
}

export default function App() {
  return (
    <div className="h-[934px] overflow-hidden bg-white font-['Liberation_Sans',Arial,sans-serif] text-[#333]">
      <header className="h-[185px] border-t border-[#202124] bg-[#009be0] text-black">
        <div className="flex pl-[40px] pt-[11px]">
          <AndroidLogo />
          <h1 className="ml-[21px] pt-[19px] text-[42.2px] font-bold leading-[48px]">Fraudulent QR Code Scanner</h1>
        </div>
        <nav className="flex gap-[50px] pl-[38px] pt-[30px] text-[24px] leading-[28px]">
          <a>Home</a>
          <a>APK Install</a>
          <a>Phones</a>
        </nav>
      </header>
      <main>
        <div className="pl-[38px]">
          <h2 className="pt-[50px] text-[36px] font-bold leading-[41px]">Information about phone b62776b47b2135bb</h2>
          <p className="mt-[31px] text-[20px] font-bold leading-[23px]">This page lists all the information obtained on this phone.</p>
          <h2 className="mt-[86px] text-[36px] font-bold leading-[41px]">Last known positions of the phone :</h2>
        </div>
        <section className="relative mx-auto mt-[100px] h-[377px] w-[840px] overflow-hidden">
          <MapCanvas />
          <svg className="absolute left-[406px] top-[180px] h-[41px] w-[28px]" viewBox="0 0 28 41">
            <path fill="#d32028" d="M14 0C6.300 0 0 6.300 0 14c0 10.500 14 27 14 27s14-16.500 14-27C28 6.300 21.700 0 14 0Z" />
            <circle cx="14" cy="14" r="7" fill="#ecead3" />
          </svg>
          <Popup />
          <ZoomControl />
        </section>
      </main>
    </div>
  );
}
